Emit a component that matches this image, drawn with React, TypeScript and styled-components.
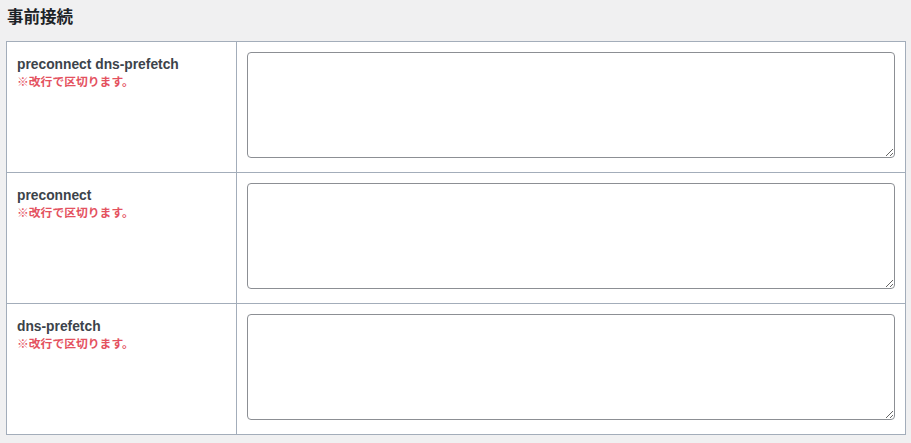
import React from "react";
import styled, { createGlobalStyle } from "styled-components";

const Global = createGlobalStyle`
  html, body { margin: 0; padding: 0; background: #f0f0f1; }
  body { font-family: "Liberation Sans", "Noto Sans CJK JP", sans-serif; }
`;

const Page = styled.div`
  padding: 5px 6px 0 6px;
  width: 900px;
`;

const Title = styled.h2`
  margin: 0 0 14px 1px;
  font-size: 16.5px;
  line-height: 22px;
  font-weight: 700;
  color: #1d2327;
  font-family: "Noto Sans CJK JP", sans-serif;
`;

const Table = styled.div`
  display: grid;
  grid-template-columns: 230px 1fr;
  background: #fff;
  border: 1px solid #a3adba;
  border-bottom: none;
`;

const LabelCell = styled.div`
  padding: 15px 10px 0 10px;
  height: 131px;
  box-sizing: border-box;
  border-right: 1px solid #a3adba;
  border-bottom: 1px solid #a3adba;
`;

const FieldCell = styled.div`
  padding: 10px 10px 0 10px;
  height: 131px;
  box-sizing: border-box;
  border-bottom: 1px solid #a3adba;
`;

const Label = styled.div`
  font-size: 13.8px;
  line-height: 16px;
  font-weight: 700;
  color: #3c434a;
`;

const Note = styled.div`
  font-size: 11.8px;
  line-height: 15px;
  font-weight: 700;
  color: #e4525f;
  font-family: "Noto Sans CJK JP", sans-serif;
`;

const Area = styled.textarea`
  display: block;
  width: 100%;
  height: 106px;
  box-sizing: border-box;
  border: 1px solid #8c8f94;
  border-radius: 4px;
  background: #fff;
  margin: 0;
  padding: 4px 8px;
`;

const rows = ["preconnect dns-prefetch", "preconnect", "dns-prefetch"];

export default function App() {
  return (
    <Page>
      <Global />
      <Title>事前接続</Title>
      <Table>
        {rows.map((r) => (
          <React.Fragment key={r}>
            <LabelCell>
              <Label>{r}</Label>
              <Note>※改行で区切ります。</Note>
            </LabelCell>
            <FieldCell>
              <Area />
            </FieldCell>
          </React.Fragment>
        ))}
      </Table>
    </Page>
  );
}
